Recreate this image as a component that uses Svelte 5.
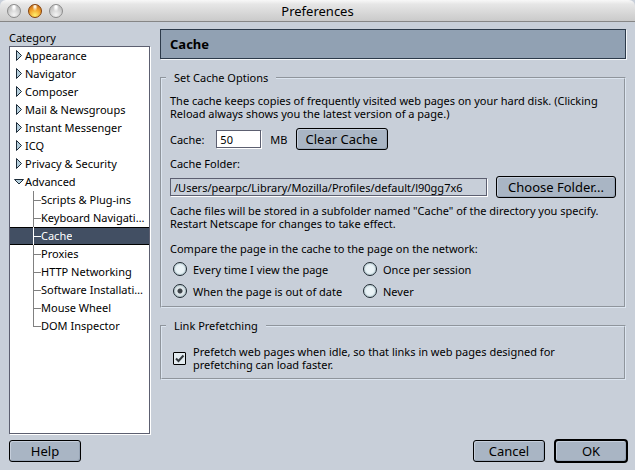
<script lang="ts">
  type Category = { name: string; open?: boolean; children?: string[] };

  let categories = $state<Category[]>([
    { name: 'Appearance' },
    { name: 'Navigator' },
    { name: 'Composer' },
    { name: 'Mail & Newsgroups' },
    { name: 'Instant Messenger' },
    { name: 'ICQ' },
    { name: 'Privacy & Security' },
    {
      name: 'Advanced',
      open: true,
      children: [
        'Scripts & Plug-ins',
        'Keyboard Navigation',
        'Cache',
        'Proxies',
        'HTTP Networking',
        'Software Installation',
        'Mouse Wheel',
        'DOM Inspector',
      ],
    },
  ]);

  const compareOptions = [
    { id: 'always', label: 'Every time I view the page' },
    { id: 'session', label: 'Once per session' },
    { id: 'outdated', label: 'When the page is out of date' },
    { id: 'never', label: 'Never' },
  ];

  let selected = $state('Cache');
  let cacheSize = $state('50');
  let folder = $state('/Users/pearpc/Library/Mozilla/Profiles/default/l90gg7x6');
  let compare = $state('outdated');
  let prefetch = $state(true);
</script>

<div class="window">
  <header class="titlebar">
    <div class="lights">
      <button class="light" aria-label="Close"></button>
      <button class="light amber" aria-label="Minimize"></button>
      <button class="light" aria-label="Zoom"></button>
    </div>
    <h1>Preferences</h1>
  </header>

  <div class="body">
    <nav class="sidebar">
      <h2 id="category">Category</h2>
      <ul class="tree" aria-labelledby="category">
        {#each categories as cat (cat.name)}
          <li>
            <button class="row" aria-expanded={!!cat.open} onclick={() => (cat.open = !cat.open)}>
              <svg class="twisty" width="12" height="14" viewBox="0 0 12 14" aria-hidden="true">
                {#if cat.open}
                  <path d="M1.5 4.5H10.5L6 9Z" />
                {:else}
                  <path d="M3.5 1.5V11.5L8.5 6.5Z" />
                {/if}
              </svg>
              <span>{cat.name}</span>
            </button>
            {#if cat.open && cat.children}
              <ul class="branch">
                {#each cat.children as child (child)}
                  <li>
                    <button
                      class="row child"
                      class:selected={selected === child}
                      onclick={() => (selected = child)}
                    >
                      <span class="elbow"></span>
                      <span class="name">{child}</span>
                    </button>
                  </li>
                {/each}
              </ul>
            {/if}
          </li>
        {/each}
      </ul>
    </nav>

    <main>
      <h2 class="banner">Cache</h2>

      <fieldset class="options">
        <legend>Set Cache Options</legend>
        <p>
          The cache keeps copies of frequently visited web pages on your hard disk. (Clicking
          Reload always shows you the latest version of a page.)
        </p>

        <div class="size">
          <label for="size">Cache:</label>
          <input id="size" class="field" type="text" bind:value={cacheSize} />
          <span class="unit">MB</span>
          <button class="btn">Clear Cache</button>
        </div>

        <label class="folder-label" for="folder">Cache Folder:</label>
        <div class="folder">
          <input id="folder" class="field" type="text" readonly value={folder} />
          <button class="btn">Choose Folder...</button>
        </div>

        <p>
          Cache files will be stored in a subfolder named "Cache" of the directory you specify.
          Restart Netscape for changes to take effect.
        </p>

        <p class="compare" id="compare">Compare the page in the cache to the page on the network:</p>
        <div class="radios" role="radiogroup" aria-labelledby="compare">
          {#each compareOptions as opt (opt.id)}
            <label>
              <input type="radio" name="compare" value={opt.id} bind:group={compare} />
              {opt.label}
            </label>
          {/each}
        </div>
      </fieldset>

      <fieldset class="prefetch">
        <legend>Link Prefetching</legend>
        <label>
          <span class="check">
            <input type="checkbox" bind:checked={prefetch} />
            {#if prefetch}
              <svg width="13" height="13" viewBox="0 0 13 13" aria-hidden="true">
                <path d="M3 6.5L5.5 9L10.5 3.5" />
              </svg>
            {/if}
          </span>
          <span>
            Prefetch web pages when idle, so that links in web pages designed for
            prefetching can load faster.
          </span>
        </label>
      </fieldset>
    </main>
  </div>

  <footer>
    <button class="btn small">Help</button>
    <span class="spacer"></span>
    <button class="btn small">Cancel</button>
    <button class="btn small default">OK</button>
  </footer>
</div>

<style>
  :global(body) {
    background: #c8cfd9;
  }
  .window {
    min-height: 100vh;
    box-sizing: border-box;
    display: flex;
    flex-direction: column;
    background: #c8cfd9;
    border-radius: 6px 6px 0 0;
    overflow: hidden;
    color: #000;
    font-family: 'Noto Sans', 'Open Sans', sans-serif;
    font-size: 11px;
    line-height: 13px;
  }
  h1,
  h2,
  p,
  ul {
    margin: 0;
    padding: 0;
    list-style: none;
  }
  button,
  input {
    font: inherit;
    color: inherit;
    margin: 0;
    box-sizing: border-box;
  }

  .titlebar {
    display: grid;
    grid-template-columns: 1fr auto 1fr;
    align-items: center;
    height: 22px;
    box-sizing: border-box;
    padding: 0 7px;
    border-bottom: 1px solid #868686;
    background: linear-gradient(#f8f8f8, #e6e6e6 20%, #cacaca);
  }
  .titlebar h1 {
    font-size: 13px;
    line-height: 20px;
    font-weight: 400;
  }
  .lights {
    display: flex;
    gap: 7px;
  }
  .light {
    width: 14px;
    height: 14px;
    padding: 0;
    border: 1px solid #8a8a8a;
    border-radius: 50%;
    background: radial-gradient(ellipse at 50% 15%, #fff 10%, transparent 35%),
      radial-gradient(circle at 50% 80%, #f4f4f4, #bebebe 75%);
  }
  .light.amber {
    border-color: #84400a;
    background: radial-gradient(ellipse at 50% 12%, #fff2d8 8%, transparent 32%),
      radial-gradient(circle at 50% 85%, #ffef6a, #f2a32c 50%, #b5560c);
  }

  .body {
    flex: 1;
    display: flex;
    gap: 10px;
    padding: 7px 9px 0;
  }
  .sidebar {
    width: 141px;
    flex: none;
    display: flex;
    flex-direction: column;
  }
  .sidebar h2 {
    font-size: 11px;
    font-weight: 400;
    line-height: 17px;
  }
  .tree {
    flex: 1;
    border: 1px solid #5c5f70;
    box-shadow: 1px 1px #fff;
    background: #fff;
  }
  .row {
    display: flex;
    align-items: center;
    width: 100%;
    height: 18px;
    padding: 0 3px;
    border: 0;
    background: none;
    text-align: left;
    line-height: 16px;
    white-space: nowrap;
  }
  .twisty {
    flex: none;
  }
  .twisty path {
    fill: #b4cedc;
    stroke: #1c2b38;
  }
  .child {
    padding-left: 23px;
  }
  .elbow {
    flex: none;
    width: 8px;
    height: 18px;
    background: linear-gradient(#808080, #808080) 0 0 / 1px 100% no-repeat,
      linear-gradient(#808080, #808080) 0 9px / 100% 1px no-repeat;
  }
  .branch li:last-child .elbow {
    background-size: 1px 9px, 100% 1px;
  }
  .name {
    min-width: 0;
    overflow: hidden;
    text-overflow: ellipsis;
  }
  .selected {
    color: #fff;
    background: #424f63;
    box-shadow: inset 0 1px #000, inset 0 -1px #000;
  }
  .selected .elbow {
    background-image: linear-gradient(#fff, #fff), linear-gradient(#fff, #fff);
  }

  main {
    flex: 1;
    min-width: 0;
  }
  .banner {
    padding: 0 9px;
    border: 1px solid #2c3a4a;
    box-shadow: 1px 1px #f4f7fa;
    background: #91a1b3;
    font-size: 13px;
    line-height: 28px;
    font-weight: 700;
  }
  fieldset {
    margin: 0;
    min-width: 0;
    padding: 0 8px;
    border: 2px groove #dce5f0;
  }
  legend {
    margin-left: -4px;
    padding: 0 8px;
  }
  .options {
    margin-top: 12px;
    padding-top: 10px;
    padding-bottom: 4px;
  }
  .size {
    display: flex;
    align-items: center;
    margin-top: 8px;
  }
  .size .field {
    width: 45px;
    margin-left: 12px;
    background: #fff;
  }
  .unit {
    margin: 0 8px 0 9px;
  }
  .field {
    height: 18px;
    padding: 0 3px;
    border: 1px solid #5c5f70;
    border-radius: 0;
    box-shadow: 1px 1px #fff;
    background: transparent;
    outline: 0;
  }
  .btn {
    height: 22px;
    padding: 0 9px;
    border: 1px solid #000;
    border-radius: 3px;
    box-shadow: inset 1px 1px #c5cedb, inset -1px -1px #97a4b5;
    background: #a9b5c4;
    font-size: 13px;
    line-height: 18px;
    white-space: nowrap;
  }
  .btn:active {
    background: #919fb1;
  }
  .folder-label {
    display: block;
    margin-top: 7px;
  }
  .folder {
    display: flex;
    align-items: center;
    gap: 9px;
    margin: 6px 0;
  }
  .folder .field {
    flex: 1;
    min-width: 0;
  }
  .folder .btn {
    min-width: 120px;
  }
  .compare {
    margin-top: 12px;
  }
  .radios {
    display: grid;
    grid-template-columns: 190px 1fr;
    margin-top: 3px;
    padding-left: 3px;
  }
  .radios label {
    display: flex;
    align-items: center;
    gap: 6px;
    height: 22px;
  }
  input[type='radio'] {
    appearance: none;
    width: 14px;
    height: 14px;
    border: 1px solid #1d2730;
    border-radius: 50%;
    box-shadow: inset 0 0 2px #6f98a0;
    background: #e9f2f6;
  }
  input[type='radio']:checked {
    background: radial-gradient(circle, #3c4248 2px, #dfe6ea 3px);
  }

  .prefetch {
    margin-top: 11px;
    padding-top: 13px;
    padding-bottom: 7px;
  }
  .prefetch label {
    display: flex;
    align-items: center;
    gap: 7px;
    padding-left: 3px;
  }
  .check {
    display: grid;
    flex: none;
  }
  .check > * {
    grid-area: 1 / 1;
  }
  input[type='checkbox'] {
    appearance: none;
    width: 13px;
    height: 13px;
    border: 1px solid #000;
    border-radius: 1px;
    background: #e3ebf0;
  }
  .check svg {
    pointer-events: none;
  }
  .check path {
    fill: none;
    stroke: #33393e;
    stroke-width: 2;
  }

  footer {
    display: flex;
    align-items: center;
    gap: 9px;
    padding: 5px 7px 7px 9px;
  }
  .spacer {
    flex: 1;
  }
  .small {
    width: 72px;
  }
  .default {
    width: 74px;
    height: 24px;
    border-width: 2px;
    border-radius: 4px;
  }
</style>
